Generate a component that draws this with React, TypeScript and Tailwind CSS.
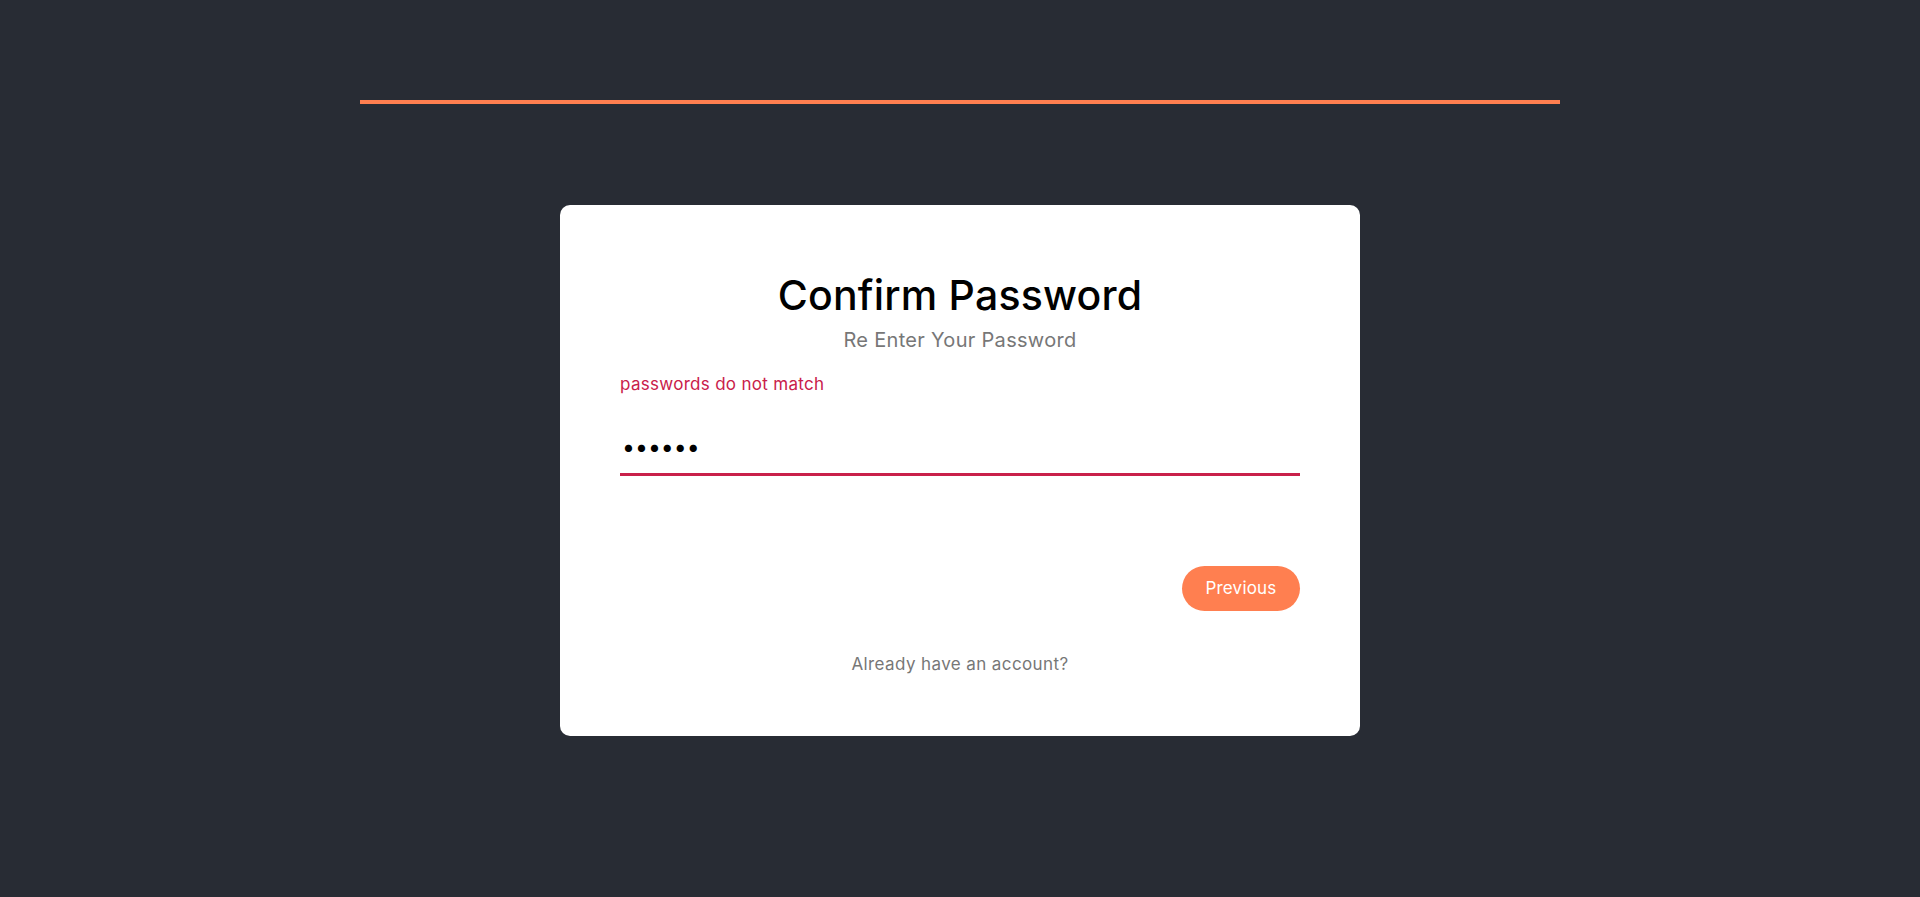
import { useState } from "react";

export default function App() {
    const [password, setPassword] = useState("123456");

    return (
        <div className="min-h-screen w-full bg-[#282c34] font-['Inter','Noto_Sans',sans-serif]">
            <div className="pt-[100px] flex justify-center">
                <div className="w-[1200px] h-[4px] bg-[#ff7f50]" />
            </div>
            <div className="flex justify-center pt-[101px]">
                <div className="w-[800px] h-[531px] bg-white rounded-[10px] px-[60px] pt-[62px] flex flex-col">
                    <h1 className="text-center text-[41px] leading-[56px] font-medium text-black tracking-[0.2px]">Confirm Password</h1>
                    <p className="text-center text-[20px] leading-[28px] text-[#777777] mt-[3px] tracking-[0.3px]">Re Enter Your Password</p>
                    <p className="text-[17px] leading-[22px] text-[#c9204a] mt-[19px] tracking-[0.3px]">passwords do not match</p>
                    <div className="mt-[30px]">
                        <input
                            type="password"
                            value={password}
                            onChange={(e) => setPassword(e.target.value)}
                            className="w-full h-[51px] px-[2px] pb-[4px] text-[23px] text-black outline-none border-b-[3px] border-[#c9204a] bg-transparent"
                        />
                    </div>
                    <div className="flex justify-end mt-[90px]">
                        <button className="h-[45px] w-[118px] rounded-full bg-[#ff7f50] text-white text-[17px] tracking-[0.2px]">
                            Previous
                        </button>
                    </div>
                    <p className="text-center text-[17px] leading-[24px] text-[#777777] mt-[41px] tracking-[0.4px]">Already have an account?</p>
                </div>
            </div>
        </div>
    );
}
